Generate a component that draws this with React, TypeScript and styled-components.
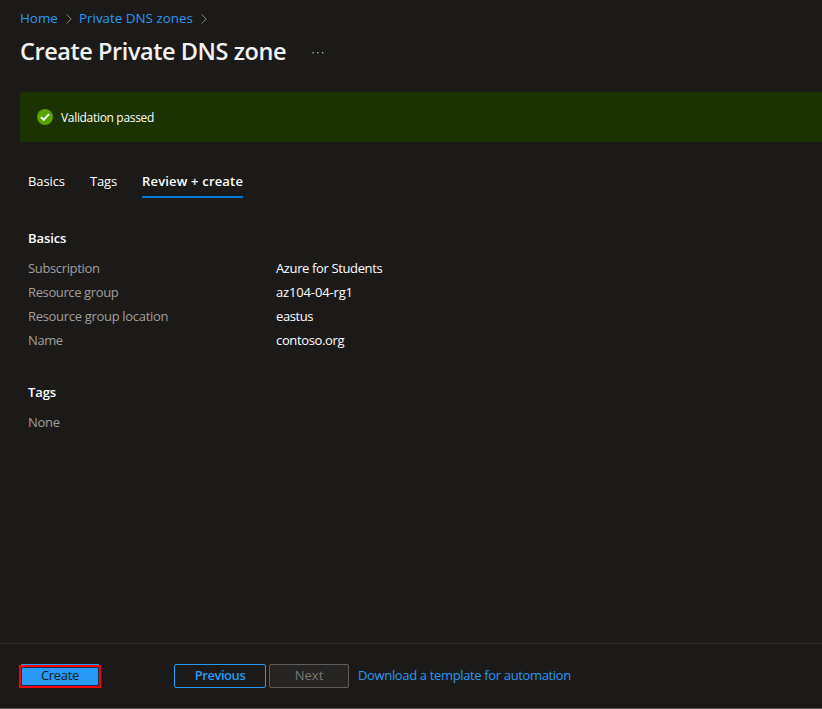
import React from "react";
import styled, { createGlobalStyle } from "styled-components";

const GlobalStyle = createGlobalStyle`
  * { box-sizing: border-box; }
  body {
    margin: 0;
    background: #1b1a19;
    color: #fff;
    font: 13px/24px "Segoe UI", "Open Sans", "Noto Sans", sans-serif;
  }
  h1, h2, dl, dd, dt, p { margin: 0; }
`;

const Page = styled.main`
  height: 709px;
  display: flex;
  flex-direction: column;
  overflow: hidden;
  border-bottom: 1px solid #5b5957;
`;

const Label = styled.span<{ $track?: number }>`
  white-space: nowrap;
  letter-spacing: ${(p) => p.$track ?? 0}px;
`;

const Breadcrumb = styled.nav`
  display: flex;
  align-items: center;
  height: 36px;
  padding-left: 20px;
  flex: none;
  font-size: 13.4px;
`;

const Crumb = styled.a<{ $width: number }>`
  width: ${(p) => p.$width}px;
  color: #2899f5;
  white-space: nowrap;
`;

const CrumbArrow = styled.svg`
  width: 6px;
  height: 10px;
  margin: 2px 7px 0 9px;
  flex: none;
`;

const TitleRow = styled.header`
  display: flex;
  align-items: center;
  height: 32px;
  padding: 0 0 2px 20px;
  flex: none;
`;

const Title = styled.h1`
  width: 292px;
  color: #f3f2f1;
  font-size: 23.5px;
  font-weight: 600;
  line-height: 30px;
`;

const MoreIcon = styled.svg`
  width: 12px;
  height: 2px;
  margin-top: 3px;
  flex: none;
`;

const Banner = styled.section`
  display: flex;
  align-items: center;
  gap: 8px;
  height: 50px;
  flex: none;
  margin: 24px 0 0 20px;
  padding-left: 17px;
  border-radius: 2px 0 0 2px;
  background: #1b3300;
  font-size: 12px;
`;

const BannerText = styled.p`
  padding-top: 2px;
`;

const StatusIcon = styled.svg`
  width: 16px;
  height: 16px;
  flex: none;
`;

const Tabs = styled.nav`
  display: flex;
  gap: 25px;
  height: 32px;
  flex: none;
  margin: 24px 0 0 28px;
`;

const Tab = styled.a<{ $width: number; $active?: boolean }>`
  width: ${(p) => p.$width}px;
  line-height: 30px;
  white-space: nowrap;
  font-weight: ${(p) => (p.$active ? 600 : 400)};
  border-bottom: 2px solid ${(p) => (p.$active ? "#0078d4" : "transparent")};
`;

const Details = styled.div`
  flex: 1;
  padding: 28px 0 0 28px;
`;

const Section = styled.section`
  margin-bottom: 28px;
`;

const SectionTitle = styled.h2`
  font-size: 13px;
  font-weight: 600;
  line-height: 24px;
  margin-bottom: 6px;
`;

const Row = styled.dl`
  display: grid;
  grid-template-columns: 248px 1fr;
  height: 24px;
`;

const Term = styled.dt`
  color: #a19f9d;
`;

const Value = styled.dd`
  color: #fff;
`;

const Footer = styled.footer`
  display: flex;
  align-items: flex-start;
  gap: 3px;
  height: 65px;
  flex: none;
  padding: 20px 0 0 19px;
  border-top: 1px solid #323130;
`;

const Highlight = styled.div`
  width: 82px;
  height: 24px;
  margin-right: 70px;
  padding-top: 1px;
  background: linear-gradient(#2899f5, #2899f5) 2px 0 / 78px 1px no-repeat;
`;

type ButtonKind = "primary" | "outline" | "disabled";

const Button = styled.button<{ $kind: ButtonKind; $width: number }>`
  display: flex;
  align-items: center;
  justify-content: center;
  width: ${(p) => p.$width}px;
  height: ${(p) => (p.$kind === "primary" ? 23 : 24)}px;
  padding: 0 0 ${(p) => (p.$kind === "primary" ? 3 : 2)}px;
  margin: 0;
  border-radius: ${(p) => (p.$kind === "primary" ? 0 : 2)}px;
  font: inherit;
  line-height: 18px;
  border: ${(p) =>
    p.$kind === "primary" ? "2px solid #fb0007" : p.$kind === "outline" ? "1px solid #2899f5" : "1px solid #605e5c"};
  background: ${(p) => (p.$kind === "primary" ? "#2899f5" : p.$kind === "outline" ? "#1b1a19" : "#252423")};
  color: ${(p) => (p.$kind === "primary" ? "#1b1a19" : p.$kind === "outline" ? "#2899f5" : "#797775")};
  font-weight: ${(p) => (p.$kind === "outline" ? 600 : 400)};
  box-shadow: ${(p) => (p.$kind === "primary" ? "inset 0 0 0 1px #102f4d" : "none")};
`;

const Download = styled.a`
  margin: -1px 0 0 6px;
  color: #2899f5;
`;

const Arrow = () => (
  <CrumbArrow viewBox="0 0 6 10" fill="none" stroke="#8a8886" strokeWidth="1">
    <path d="M.7.5 5.2 5 .7 9.5" />
  </CrumbArrow>
);

interface Detail {
  term: string;
  value: string;
  termTrack: number;
  valueTrack: number;
}

const basics: Detail[] = [
  { term: "Subscription", value: "Azure for Students", termTrack: -0.35, valueTrack: -0.37 },
  { term: "Resource group", value: "az104-04-rg1", termTrack: -0.38, valueTrack: -0.15 },
  { term: "Resource group location", value: "eastus", termTrack: -0.31, valueTrack: -0.4 },
  { term: "Name", value: "contoso.org", termTrack: -0.4, valueTrack: -0.35 },
];

export default function App() {
  return (
    <>
      <GlobalStyle />
      <Page>
        <Breadcrumb>
          <Crumb $width={37}><Label>Home</Label></Crumb>
          <Arrow />
          <Crumb $width={113}><Label>Private DNS zones</Label></Crumb>
          <Arrow />
        </Breadcrumb>
        <TitleRow>
          <Title><Label $track={-0.44}>Create Private DNS zone</Label></Title>
          <MoreIcon viewBox="0 0 12 2" fill="#c8c6c4">
            <rect x=".5" width="1.3" height="1.3" />
            <rect x="5.2" width="1.3" height="1.3" />
            <rect x="10" width="1.3" height="1.3" />
          </MoreIcon>
        </TitleRow>
        <Banner>
          <StatusIcon viewBox="0 0 16 16">
            <circle cx="8" cy="8" r="8" fill="#57a300" />
            <path d="m4 8.1 2.7 2.7 5.2-5.7" fill="none" stroke="#fff" strokeWidth="2" />
          </StatusIcon>
          <BannerText><Label $track={-0.32}>Validation passed</Label></BannerText>
        </Banner>
        <Tabs>
          <Tab $width={37}><Label $track={-0.1}>Basics</Label></Tab>
          <Tab $width={27}><Label $track={-0.15}>Tags</Label></Tab>
          <Tab $width={101} $active><Label $track={0.18}>Review + create</Label></Tab>
        </Tabs>
        <Details>
          <Section>
            <SectionTitle><Label $track={-0.1}>Basics</Label></SectionTitle>
            {basics.map((d) => (
              <Row key={d.term}>
                <Term><Label $track={d.termTrack}>{d.term}</Label></Term>
                <Value><Label $track={d.valueTrack}>{d.value}</Label></Value>
              </Row>
            ))}
          </Section>
          <Section>
            <SectionTitle><Label $track={-0.1}>Tags</Label></SectionTitle>
            <Row><Term><Label $track={-0.3}>None</Label></Term></Row>
          </Section>
        </Details>
        <Footer>
          <Highlight>
            <Button $kind="primary" $width={82}><Label $track={-0.3}>Create</Label></Button>
          </Highlight>
          <Button $kind="outline" $width={92}><Label $track={-0.45}>Previous</Label></Button>
          <Button $kind="disabled" $width={80} disabled><Label>Next</Label></Button>
          <Download><Label $track={-0.35}>Download a template for automation</Label></Download>
        </Footer>
      </Page>
    </>
  );
}
